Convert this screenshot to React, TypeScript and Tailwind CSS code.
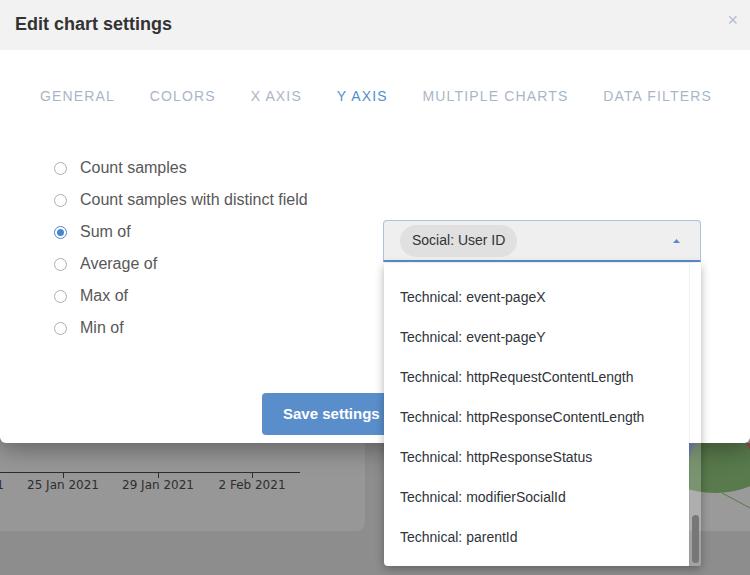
import React from 'react';

// 图表设置弹窗：标签页 + Y 轴聚合方式单选 + 字段下拉（已展开）
const TABS = ['General', 'Colors', 'X axis', 'Y axis', 'Multiple charts', 'Data filters'];
const ACTIVE_TAB = 'Y axis';

const MODES = [
  'Count samples',
  'Count samples with distinct field',
  'Sum of',
  'Average of',
  'Max of',
  'Min of',
];

const FIELDS = [
  'Technical: event-pageX',
  'Technical: event-pageY',
  'Technical: httpRequestContentLength',
  'Technical: httpResponseContentLength',
  'Technical: httpResponseStatus',
  'Technical: modifierSocialId',
  'Technical: parentId',
];

const TICKS = [
  { x: -32, label: '21 Jan 2021' },
  { x: 63, label: '25 Jan 2021' },
  { x: 158, label: '29 Jan 2021' },
  { x: 252, label: '2 Feb 2021' },
];

// 背景仪表盘（被遮罩压暗）
const Dashboard: React.FC = () => (
  <div className="flex gap-[25px] h-[531px]">
    <div className="w-[365px] bg-[#979797] rounded-br-lg flex flex-col justify-end">
      <svg width="365" height="88" viewBox="0 443 365 88" className="block">
        <line x1="0" y1="472.5" x2="300" y2="472.5" stroke="#2e2e2e" strokeWidth="1" />
        {TICKS.map((t) => (
          <g key={t.label}>
            <line x1={t.x + 0.5} y1="472" x2={t.x + 0.5} y2="478" stroke="#2e2e2e" strokeWidth="1" />
            <text
              x={t.x}
              y="489"
              textAnchor="middle"
              fontSize="12"
              fill="#2e2e2e"
              fontFamily="'DejaVu Sans', sans-serif"
            >
              {t.label}
            </text>
          </g>
        ))}
      </svg>
    </div>
    <div className="flex-1 bg-[#9a9a9a] rounded-bl-lg flex flex-col justify-end">
      <svg width="360" height="88" viewBox="390 443 360 88" className="block">
        <circle cx="715" cy="400" r="93" fill="#587a4c" />
        <path d="M715 400 L670 500 L600 500 L600 380 Z" fill="#4f638e" />
        <path d="M715 400 L775 485 L800 485 L800 300 Z" fill="#8b4a4c" />
        <line x1="722" y1="493" x2="752" y2="509" stroke="#587a4c" strokeWidth="1" />
      </svg>
    </div>
  </div>
);

const Radio: React.FC<{ checked: boolean }> = ({ checked }) => (
  <span
    className={
      checked
        ? 'w-[13px] h-[13px] rounded-full border border-[#4a86cf] flex items-center justify-center bg-white'
        : 'w-[13px] h-[13px] rounded-full border border-[#a7aeb9] bg-white'
    }
  >
    {checked && <span className="w-[7px] h-[7px] rounded-full bg-[#4a86cf]" />}
  </span>
);

const FieldSelect: React.FC = () => (
  <div className="relative w-[318px]">
    <div className="h-[42px] bg-[#efefef] border border-[#a9c2e2] border-b-2 border-b-[#5a8ccc] rounded-t flex items-center justify-between pl-[16px] pr-[20px]">
      <span className="h-8 px-3 rounded-full bg-[#e0e0e0] flex items-center text-[14px] text-[#333]">
        Social: User ID
      </span>
      <svg width="7" height="4" viewBox="0 0 7 4" className="block">
        <path d="M0 4 L3.5 0 L7 4 Z" fill="#5a8ccc" />
      </svg>
    </div>

    {/* 已展开的下拉列表 */}
    <div className="absolute left-px right-0 top-[43px] h-[303px] flex shadow-[0_3px_10px_rgba(0,0,0,0.3)] rounded-b">
      <div className="flex-1 bg-white overflow-hidden rounded-bl pt-[14px]">
        {FIELDS.map((f) => (
          <div key={f} className="h-10 flex items-center pl-[16px] text-[14px] text-[#2f333a]">
            {f}
          </div>
        ))}
      </div>
      <div className="w-[12px] bg-white/20 border-l border-black/5 flex flex-col justify-end items-center pb-[3px]">
        <div className="w-[7px] h-[48px] rounded-full bg-[#777]" />
      </div>
    </div>
  </div>
);

const App: React.FC = () => (
  <div className="relative w-[750px] h-[575px] overflow-hidden bg-[#8d8d8d] font-['Liberation_Sans',Arial,sans-serif]">
    <Dashboard />

    {/* 弹窗 */}
    <div className="absolute inset-x-0 top-0 h-[443px] bg-white rounded-b-md shadow-[0_6px_24px_rgba(0,0,0,0.35)] flex flex-col">
      <div className="h-[50px] bg-[#f2f2f2] flex items-center justify-between pl-[15px] pr-[12px]">
        <span className="text-[18px] font-bold text-[#333] -mt-[2px]">Edit chart settings</span>
        <span className="text-[18px] leading-none text-[#b3bfcc] -mt-[10px]">×</span>
      </div>

      <div className="mt-[36px] h-5 flex items-center justify-between pl-[40px] pr-[38px]">
        {TABS.map((t) => (
          <span
            key={t}
            className={
              t === ACTIVE_TAB
                ? 'text-[14px] uppercase tracking-[1.15px] text-[#4f8fd2]'
                : 'text-[14px] uppercase tracking-[1.15px] text-[#aab6c7]'
            }
          >
            {t}
          </span>
        ))}
      </div>

      <div className="mt-[46px] flex">
        <div className="pl-[54px] w-[383px] flex flex-col">
          {MODES.map((m) => (
            <div key={m} className="h-8 flex items-center gap-[13px]">
              <Radio checked={m === 'Sum of'} />
              <span className="text-[16px] text-[#585858]">{m}</span>
            </div>
          ))}
        </div>
        <div className="pt-[68px]">
          <FieldSelect />
        </div>
      </div>

      <div className="mt-[49px] pl-[262px] flex">
        <button className="h-[42px] px-[21px] rounded bg-[#5a8ecb] text-white text-[15px] font-bold">
          Save settings
        </button>
      </div>
    </div>
  </div>
);

export default App;
